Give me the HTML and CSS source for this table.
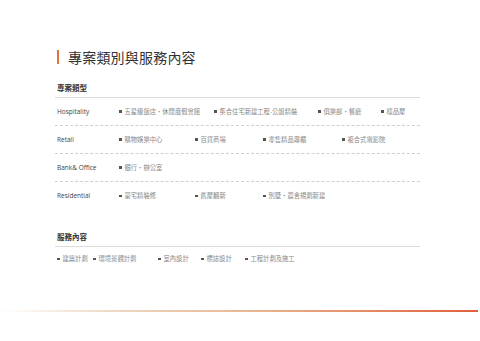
FILE: index.html
```html
<!DOCTYPE html>
<html lang="zh-Hant">
<head>
<meta charset="utf-8">
<link rel="stylesheet" href="styles.css">
</head>
<body>
<div class="page">
  <h1 class="title"><span class="bar"></span><span>專案類別與服務內容</span></h1>

  <h2 class="section-title">專案類型</h2>
  <div class="row">
    <div class="label">Hospitality</div>
    <ul class="items cols-hosp">
      <li>五星級飯店・休閒度假會館</li>
      <li>集合住宅新建工程-公設精裝</li>
      <li>俱樂部・餐廳</li>
      <li>樣品屋</li>
    </ul>
  </div>
  <div class="row">
    <div class="label">Retail</div>
    <ul class="items cols-retail">
      <li>購物娛樂中心</li>
      <li>百貨商場</li>
      <li>零售精品專櫃</li>
      <li>複合式電影院</li>
    </ul>
  </div>
  <div class="row">
    <div class="label">Bank&amp; Office</div>
    <ul class="items cols-retail">
      <li>銀行・辦公室</li>
    </ul>
  </div>
  <div class="row last">
    <div class="label">Residential</div>
    <ul class="items cols-retail">
      <li>豪宅精裝修</li>
      <li>舊屋翻新</li>
      <li>別墅・農舍規劃新建</li>
    </ul>
  </div>

  <h2 class="section-title services-title">服務內容</h2>
  <ul class="items services">
    <li>建築計劃</li>
    <li>環境景觀計劃</li>
    <li>室內設計</li>
    <li>標誌設計</li>
    <li>工程計劃及施工</li>
  </ul>
</div>
<div class="footer-line"></div>
</body>
</html>
```

FILE: styles.css
```css
html, body {
  margin: 0;
  padding: 0;
  background: #fff;
}
body {
  width: 480px;
  height: 341px;
  overflow: hidden;
  font-family: "Noto Sans CJK TC", "Noto Sans", sans-serif;
  color: #333;
}
.page {
  padding: 50px 0 0 55px;
  width: 365px;
}
.title {
  margin: 0 0 0 2px;
  height: 14px;
  display: flex;
  align-items: center;
  gap: 9px;
  font-size: 14px;
  line-height: 14px;
  font-weight: 400;
  color: #333;
  letter-spacing: 0.2px;
}
.bar {
  width: 2px;
  height: 14px;
  background: #e0703c;
  flex: none;
}
.section-title {
  margin: 19px 0 0 0;
  padding: 0 0 4px 2px;
  font-size: 7.5px;
  line-height: 10px;
  font-weight: 700;
  color: #333;
  border-bottom: 1px solid #ddd;
}
.services-title {
  margin-top: 22px;
}
.row {
  height: 27px;
  display: flex;
  align-items: center;
  border-bottom: 1px dashed #cfcfcf;
}
.row.last {
  border-bottom: none;
  height: 28px;
}
.label {
  width: 64px;
  padding-left: 2px;
  box-sizing: border-box;
  flex: none;
  font-family: "Open Sans", "Noto Sans", sans-serif;
  font-size: 6.5px;
  color: #444;
  line-height: 10px;
}
.items {
  list-style: none;
  margin: 0;
  padding: 0;
  display: grid;
  grid-auto-flow: column;
  font-size: 6.3px;
  line-height: 10px;
  color: #888;
}
.items li {
  display: flex;
  align-items: center;
  gap: 3px;
  white-space: nowrap;
}
.items li::before {
  content: "";
  width: 2.5px;
  height: 2.5px;
  background: #555;
  flex: none;
}
.cols-hosp {
  grid-template-columns: 95px 104px 63px auto;
}
.cols-retail {
  grid-template-columns: 76px 68px 79px auto;
}
.services {
  margin: 7px 0 0 2px;
  grid-template-columns: 36px 65px 43px 44px auto;
}
.footer-line {
  margin-top: 46px;
  width: 478px;
  height: 2px;
  background: linear-gradient(to right, rgba(240, 215, 190, 0) 0%, #ecd6c0 25%, #e8b48e 55%, #e0603a 100%);
}
```
